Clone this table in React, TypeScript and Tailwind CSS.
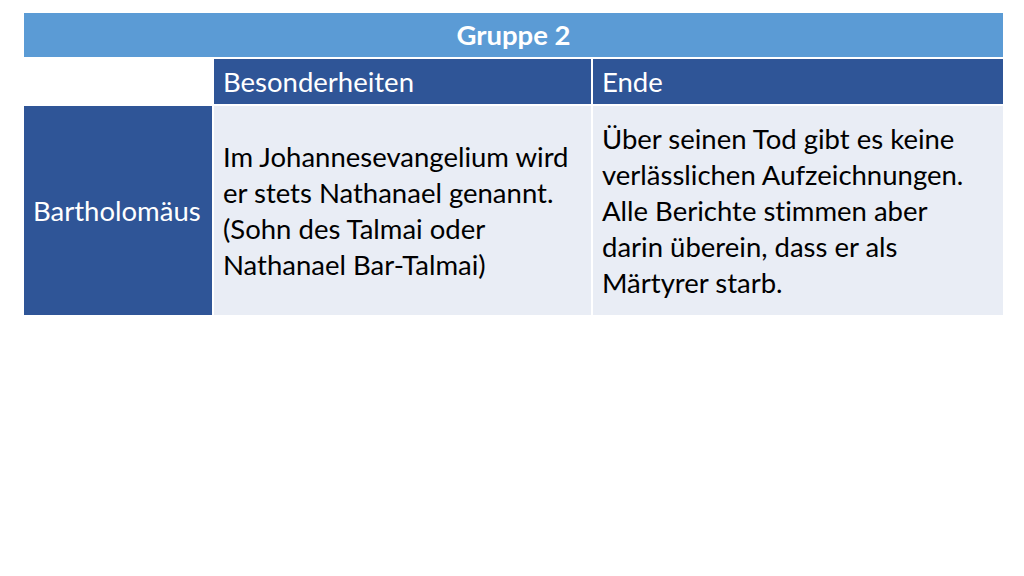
const font = { fontFamily: "Lato, 'Open Sans', sans-serif" };

export default function App() {
  return (
    <div className="h-[576px] w-[1024px] bg-white pl-[24px] pt-[13px]" style={font}>
      <div className="grid w-[979px] grid-cols-[188px_377px_410px] gap-[2px] bg-white text-[27.5px] leading-[36px] [font-variant-ligatures:none]">
        <div className="col-span-3 flex h-[44px] items-center justify-center bg-[#5b9bd5] font-bold text-white">
          Gruppe 2
        </div>
        <div className="h-[45px] bg-white" />
        <div className="flex items-center bg-[#2f5597] px-[9px] text-white">Besonderheiten</div>
        <div className="flex items-center bg-[#2f5597] px-[9px] text-white">Ende</div>
        <div className="flex h-[209px] items-center bg-[#2f5597] px-[9px] text-white">Bartholomäus</div>
        <div className="flex items-center whitespace-nowrap bg-[#e9edf5] px-[9px] text-black">
          <p>
            Im Johannesevangelium wird
            <br />
            er stets Nathanael genannt.
            <br />
            (Sohn des Talmai oder
            <br />
            Nathanael Bar-Talmai)
          </p>
        </div>
        <div className="flex items-center whitespace-nowrap bg-[#e9edf5] px-[9px] text-black">
          <p>
            Über seinen Tod gibt es keine
            <br />
            verlässlichen Aufzeichnungen.
            <br />
            Alle Berichte stimmen aber
            <br />
            darin überein, dass er als
            <br />
            Märtyrer starb.
          </p>
        </div>
      </div>
    </div>
  );
}
